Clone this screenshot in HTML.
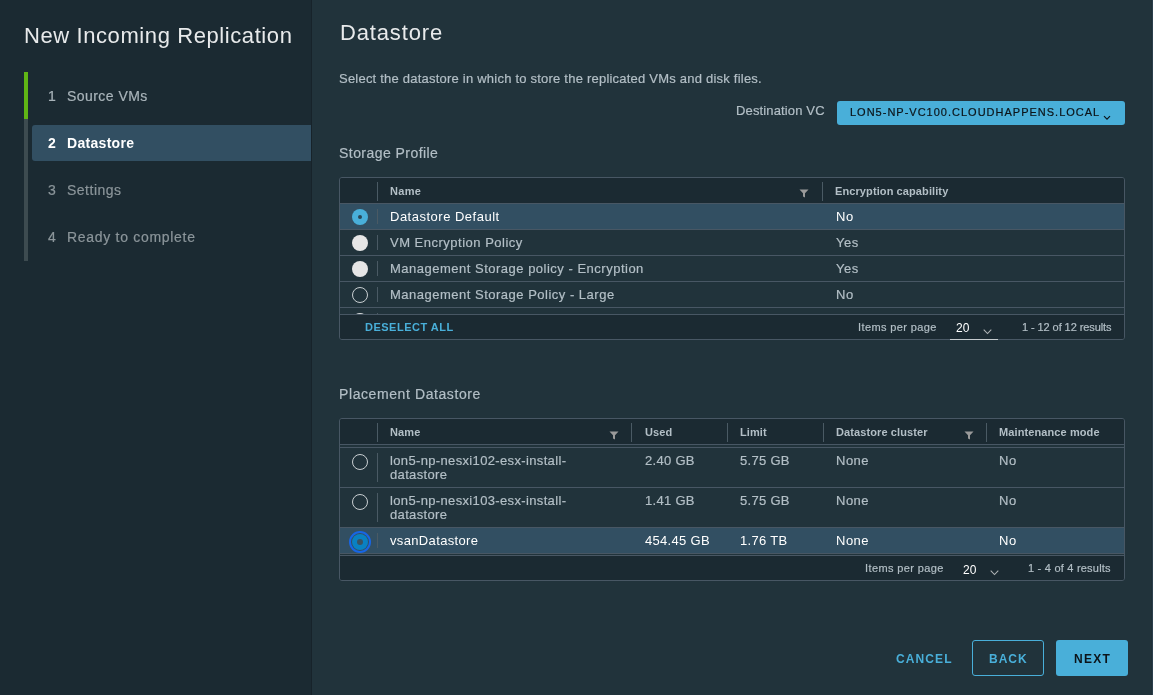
<!DOCTYPE html>
<html><head><meta charset="utf-8"><title>New Incoming Replication</title>
<style>
html,body{margin:0;padding:0;width:1153px;height:695px;overflow:hidden;background:#21333b;}
body{position:relative;font-family:"Liberation Sans",sans-serif;}
.t{position:absolute;white-space:nowrap;line-height:1;will-change:transform;}
.s{-webkit-text-stroke:0.2px currentColor;}
.r{position:absolute;}
</style></head><body>
<div class="r" style="left:0px;top:0px;width:311px;height:695px;background:#1b2a32"></div>
<div class="r" style="left:311px;top:0px;width:1px;height:695px;background:#17232a"></div>
<div class="t" style="left:23.50px;top:25.00px;font-size:22px;color:#e8eaeb;font-weight:400;letter-spacing:0.59px;">New Incoming Replication</div>
<div class="r" style="left:24px;top:72px;width:4px;height:189px;background:#3d4b50"></div>
<div class="r" style="left:24px;top:72px;width:4px;height:47px;background:#60b515"></div>
<div class="r" style="left:32px;top:125px;width:279px;height:36px;background:#324f62;border-radius:3px 0 0 3px"></div>
<div class="t s" style="left:48.00px;top:89.00px;font-size:14px;color:#a9b4ba;font-weight:400;letter-spacing:0px;">1</div>
<div class="t s" style="left:66.50px;top:89.00px;font-size:14px;color:#a9b4ba;font-weight:400;letter-spacing:0.45px;">Source VMs</div>
<div class="t" style="left:48.00px;top:136.00px;font-size:14px;color:#ffffff;font-weight:700;letter-spacing:0px;">2</div>
<div class="t" style="left:66.50px;top:136.00px;font-size:14px;color:#ffffff;font-weight:700;letter-spacing:0.3px;">Datastore</div>
<div class="t s" style="left:48.00px;top:183.00px;font-size:14px;color:#8b959a;font-weight:400;letter-spacing:0px;">3</div>
<div class="t s" style="left:66.50px;top:183.00px;font-size:14px;color:#8b959a;font-weight:400;letter-spacing:0.5px;">Settings</div>
<div class="t s" style="left:48.00px;top:230.00px;font-size:14px;color:#8b959a;font-weight:400;letter-spacing:0px;">4</div>
<div class="t s" style="left:66.50px;top:230.00px;font-size:14px;color:#8b959a;font-weight:400;letter-spacing:0.7px;">Ready to complete</div>
<div class="t" style="left:340.00px;top:22.00px;font-size:22px;color:#e8eaeb;font-weight:400;letter-spacing:0.85px;">Datastore</div>
<div class="t s" style="left:338.50px;top:72.00px;font-size:13px;color:#b3bfc6;font-weight:400;letter-spacing:0.22px;">Select the datastore in which to store the replicated VMs and disk files.</div>
<div class="t s" style="left:735.50px;top:104.00px;font-size:13px;color:#b3bfc6;font-weight:400;letter-spacing:0.14px;">Destination VC</div>
<div class="r" style="left:837px;top:101px;width:288px;height:24px;background:#49afd9;border-radius:3px"></div>
<div class="t s" style="left:850.00px;top:107.00px;font-size:11px;color:#0c1419;font-weight:400;letter-spacing:1.0px;">LON5-NP-VC100.CLOUDHAPPENS.LOCAL</div>
<svg class="r" style="left:1103px;top:115px" width="8" height="6" viewBox="0 0 8 6"><path d="M1 1.2 L4 4.2 L7 1.2" stroke="#0c1419" stroke-width="1.2" fill="none"/></svg>
<div class="t s" style="left:338.50px;top:146.00px;font-size:14px;color:#b3bfc6;font-weight:400;letter-spacing:0.45px;">Storage Profile</div>
<div class="r" style="left:339px;top:177px;width:786px;height:163px;border:1px solid #485764;border-radius:3px;box-sizing:border-box;background:#21333b;overflow:hidden"></div>
<div class="r" style="left:340px;top:178px;width:784px;height:25px;background:#1b2a32;border-radius:2px 2px 0 0"></div>
<div class="r" style="left:340px;top:203px;width:784px;height:1px;background:#485764"></div>
<div class="r" style="left:340px;top:204px;width:784px;height:25px;background:#324f62"></div>
<div class="r" style="left:340px;top:229px;width:784px;height:1px;background:#485764"></div>
<div class="r" style="left:352px;top:209px;width:16px;height:16px;background:#49afd9;border-radius:50%"></div>
<div class="r" style="left:358px;top:215px;width:4px;height:4px;background:#2c4656;border-radius:50%"></div>
<div class="r" style="left:377px;top:209px;width:1px;height:15px;background:#4a5a64"></div>
<div class="t" style="left:390.00px;top:210.00px;font-size:13px;color:#ffffff;font-weight:400;letter-spacing:0.5px;">Datastore Default</div>
<div class="t" style="left:835.50px;top:210.00px;font-size:13px;color:#ffffff;font-weight:400;letter-spacing:0.5px;">No</div>
<div class="r" style="left:340px;top:255px;width:784px;height:1px;background:#485764"></div>
<div class="r" style="left:352px;top:235px;width:16px;height:16px;background:#e6e6e6;border-radius:50%"></div>
<div class="r" style="left:377px;top:235px;width:1px;height:15px;background:#4a5a64"></div>
<div class="t s" style="left:390.00px;top:236.00px;font-size:13px;color:#b3bfc6;font-weight:400;letter-spacing:0.5px;">VM Encryption Policy</div>
<div class="t s" style="left:835.50px;top:236.00px;font-size:13px;color:#b3bfc6;font-weight:400;letter-spacing:0.5px;">Yes</div>
<div class="r" style="left:340px;top:281px;width:784px;height:1px;background:#485764"></div>
<div class="r" style="left:352px;top:261px;width:16px;height:16px;background:#e6e6e6;border-radius:50%"></div>
<div class="r" style="left:377px;top:261px;width:1px;height:15px;background:#4a5a64"></div>
<div class="t s" style="left:390.00px;top:262.00px;font-size:13px;color:#b3bfc6;font-weight:400;letter-spacing:0.5px;">Management Storage policy - Encryption</div>
<div class="t s" style="left:835.50px;top:262.00px;font-size:13px;color:#b3bfc6;font-weight:400;letter-spacing:0.5px;">Yes</div>
<div class="r" style="left:340px;top:307px;width:784px;height:1px;background:#485764"></div>
<div class="r" style="left:352px;top:287px;width:14px;height:14px;border:1px solid #c9cfd2;border-radius:50%"></div>
<div class="r" style="left:377px;top:287px;width:1px;height:15px;background:#4a5a64"></div>
<div class="t s" style="left:390.00px;top:288.00px;font-size:13px;color:#b3bfc6;font-weight:400;letter-spacing:0.5px;">Management Storage Policy - Large</div>
<div class="t s" style="left:835.50px;top:288.00px;font-size:13px;color:#b3bfc6;font-weight:400;letter-spacing:0.5px;">No</div>
<div class="r" style="left:340px;top:308px;width:784px;height:6px;overflow:hidden"><div class="r" style="left:12px;top:5px;width:16px;height:16px;background:#d8dcde;border-radius:50%"></div><div class="r" style="left:37px;top:5px;width:1px;height:14px;background:#4a5a64"></div></div>
<div class="r" style="left:340px;top:314px;width:784px;height:1px;background:#485764"></div>
<div class="r" style="left:340px;top:315px;width:784px;height:24px;background:#1b2a32;border-radius:0 0 2px 2px"></div>
<div class="r" style="left:377px;top:182px;width:1px;height:19px;background:#4a5a64"></div>
<div class="r" style="left:822px;top:182px;width:1px;height:19px;background:#4a5a64"></div>
<svg class="r" style="left:799px;top:189px" width="10" height="9" viewBox="0 0 10 9"><path d="M0.5 0.5 H9.5 L6 4.2 V8.5 L4 7.5 V4.2 Z" fill="#9a9a9a"/></svg>
<div class="t" style="left:390.00px;top:186.00px;font-size:11px;color:#b3bfc6;font-weight:700;letter-spacing:0.3px;">Name</div>
<div class="t" style="left:835.00px;top:186.00px;font-size:11px;color:#b3bfc6;font-weight:700;letter-spacing:0.1px;">Encryption capability</div>
<div class="t" style="left:365.00px;top:322.00px;font-size:11px;color:#49afd9;font-weight:700;letter-spacing:0.5px;">DESELECT ALL</div>
<div class="t s" style="left:858.00px;top:322.00px;font-size:11px;color:#b3bfc6;font-weight:400;letter-spacing:0.39px;">Items per page</div>
<div class="t" style="left:955.50px;top:322.00px;font-size:12px;color:#ffffff;font-weight:400;letter-spacing:0px;">20</div>
<svg class="r" style="left:982.5px;top:329px" width="9" height="6" viewBox="0 0 9 6"><path d="M0.7 0.7 L4.5 4.5 L8.3 0.7" stroke="#b0b4b6" stroke-width="1.05" fill="none"/></svg>
<div class="r" style="left:950px;top:339px;width:48px;height:1px;background:#c5cbce"></div>
<div class="t s" style="left:1021.50px;top:322.00px;font-size:11px;color:#b3bfc6;font-weight:400;letter-spacing:-0.08px;">1 - 12 of 12 results</div>
<div class="t s" style="left:338.50px;top:387.00px;font-size:14px;color:#b3bfc6;font-weight:400;letter-spacing:0.59px;">Placement Datastore</div>
<div class="r" style="left:339px;top:418px;width:786px;height:163px;border:1px solid #485764;border-radius:3px;box-sizing:border-box;background:#21333b;overflow:hidden"></div>
<div class="r" style="left:340px;top:419px;width:784px;height:25px;background:#1b2a32;border-radius:2px 2px 0 0"></div>
<div class="r" style="left:340px;top:444px;width:784px;height:1px;background:#485764"></div>
<div class="r" style="left:340px;top:445px;width:784px;height:3px;background:#21333b"></div>
<div class="r" style="left:340px;top:447px;width:784px;height:1px;background:#485764"></div>
<div class="r" style="left:377px;top:423px;width:1px;height:19px;background:#4a5a64"></div>
<div class="r" style="left:631px;top:423px;width:1px;height:19px;background:#4a5a64"></div>
<div class="r" style="left:727px;top:423px;width:1px;height:19px;background:#4a5a64"></div>
<div class="r" style="left:823px;top:423px;width:1px;height:19px;background:#4a5a64"></div>
<div class="r" style="left:986px;top:423px;width:1px;height:19px;background:#4a5a64"></div>
<svg class="r" style="left:608.5px;top:430.5px" width="10" height="9" viewBox="0 0 10 9"><path d="M0.5 0.5 H9.5 L6 4.2 V8.5 L4 7.5 V4.2 Z" fill="#9a9a9a"/></svg>
<svg class="r" style="left:963.5px;top:430.5px" width="10" height="9" viewBox="0 0 10 9"><path d="M0.5 0.5 H9.5 L6 4.2 V8.5 L4 7.5 V4.2 Z" fill="#9a9a9a"/></svg>
<div class="t" style="left:390.00px;top:427.00px;font-size:11px;color:#b3bfc6;font-weight:700;letter-spacing:0.1px;">Name</div>
<div class="t" style="left:644.50px;top:427.00px;font-size:11px;color:#b3bfc6;font-weight:700;letter-spacing:0.1px;">Used</div>
<div class="t" style="left:740.00px;top:427.00px;font-size:11px;color:#b3bfc6;font-weight:700;letter-spacing:0.1px;">Limit</div>
<div class="t" style="left:836.00px;top:427.00px;font-size:11px;color:#b3bfc6;font-weight:700;letter-spacing:0.1px;">Datastore cluster</div>
<div class="t" style="left:999.00px;top:427.00px;font-size:11px;color:#b3bfc6;font-weight:700;letter-spacing:0.1px;">Maintenance mode</div>
<div class="r" style="left:340px;top:487px;width:784px;height:1px;background:#485764"></div>
<div class="r" style="left:352px;top:454px;width:14px;height:14px;border:1px solid #c9cfd2;border-radius:50%"></div>
<div class="r" style="left:377px;top:453px;width:1px;height:29px;background:#4a5a64"></div>
<div class="t s" style="left:390px;top:454px;font-size:13px;line-height:14px;color:#b3bfc6;letter-spacing:0.35px">lon5-np-nesxi102-esx-install-<br>datastore</div>
<div class="t s" style="left:644.50px;top:454.00px;font-size:13px;color:#b3bfc6;font-weight:400;letter-spacing:0.3px;">2.40 GB</div>
<div class="t s" style="left:740.00px;top:454.00px;font-size:13px;color:#b3bfc6;font-weight:400;letter-spacing:0.3px;">5.75 GB</div>
<div class="t s" style="left:836.00px;top:454.00px;font-size:13px;color:#b3bfc6;font-weight:400;letter-spacing:0.5px;">None</div>
<div class="t s" style="left:999.00px;top:454.00px;font-size:13px;color:#b3bfc6;font-weight:400;letter-spacing:0.5px;">No</div>
<div class="r" style="left:340px;top:527px;width:784px;height:1px;background:#485764"></div>
<div class="r" style="left:352px;top:494px;width:14px;height:14px;border:1px solid #c9cfd2;border-radius:50%"></div>
<div class="r" style="left:377px;top:493px;width:1px;height:29px;background:#4a5a64"></div>
<div class="t s" style="left:390px;top:494px;font-size:13px;line-height:14px;color:#b3bfc6;letter-spacing:0.35px">lon5-np-nesxi103-esx-install-<br>datastore</div>
<div class="t s" style="left:644.50px;top:494.00px;font-size:13px;color:#b3bfc6;font-weight:400;letter-spacing:0.3px;">1.41 GB</div>
<div class="t s" style="left:740.00px;top:494.00px;font-size:13px;color:#b3bfc6;font-weight:400;letter-spacing:0.3px;">5.75 GB</div>
<div class="t s" style="left:836.00px;top:494.00px;font-size:13px;color:#b3bfc6;font-weight:400;letter-spacing:0.5px;">None</div>
<div class="t s" style="left:999.00px;top:494.00px;font-size:13px;color:#b3bfc6;font-weight:400;letter-spacing:0.5px;">No</div>
<div class="r" style="left:340px;top:528px;width:784px;height:25px;background:#324f62"></div>
<div class="r" style="left:340px;top:553px;width:784px;height:1px;background:#485764"></div>
<div class="r" style="left:349px;top:531px;width:18px;height:18px;border:2px solid #1766e6;border-radius:50%"></div>
<div class="r" style="left:352px;top:534px;width:16px;height:16px;background:#0981c2;border-radius:50%"></div>
<div class="r" style="left:357px;top:539px;width:6px;height:6px;background:#3b5261;border-radius:50%"></div>
<div class="r" style="left:377px;top:533px;width:1px;height:15px;background:#4a5a64"></div>
<div class="t" style="left:390px;top:534px;font-size:13px;line-height:14px;color:#ffffff;letter-spacing:0.35px">vsanDatastore</div>
<div class="t" style="left:644.50px;top:534.00px;font-size:13px;color:#ffffff;font-weight:400;letter-spacing:0.3px;">454.45 GB</div>
<div class="t" style="left:740.00px;top:534.00px;font-size:13px;color:#ffffff;font-weight:400;letter-spacing:0.3px;">1.76 TB</div>
<div class="t" style="left:836.00px;top:534.00px;font-size:13px;color:#ffffff;font-weight:400;letter-spacing:0.5px;">None</div>
<div class="t" style="left:999.00px;top:534.00px;font-size:13px;color:#ffffff;font-weight:400;letter-spacing:0.5px;">No</div>
<div class="r" style="left:340px;top:555px;width:784px;height:1px;background:#485764"></div>
<div class="r" style="left:340px;top:556px;width:784px;height:24px;background:#1b2a32;border-radius:0 0 2px 2px"></div>
<div class="t s" style="left:865.00px;top:563.00px;font-size:11px;color:#b3bfc6;font-weight:400;letter-spacing:0.39px;">Items per page</div>
<div class="t" style="left:963.00px;top:564.00px;font-size:12px;color:#ffffff;font-weight:400;letter-spacing:0px;">20</div>
<svg class="r" style="left:989.5px;top:570px" width="9" height="6" viewBox="0 0 9 6"><path d="M0.7 0.7 L4.5 4.5 L8.3 0.7" stroke="#b0b4b6" stroke-width="1.05" fill="none"/></svg>
<div class="t s" style="left:1028.00px;top:563.00px;font-size:11px;color:#b3bfc6;font-weight:400;letter-spacing:0.22px;">1 - 4 of 4 results</div>
<div class="t" style="left:895.50px;top:653.00px;font-size:12px;color:#49afd9;font-weight:700;letter-spacing:1.1px;">CANCEL</div>
<div class="r" style="left:972px;top:640px;width:72px;height:36px;border:1px solid #49afd9;border-radius:3px;box-sizing:border-box"></div>
<div class="t" style="left:988.50px;top:653.00px;font-size:12px;color:#49afd9;font-weight:700;letter-spacing:1.0px;">BACK</div>
<div class="r" style="left:1056px;top:640px;width:72px;height:36px;background:#49afd9;border-radius:3px"></div>
<div class="t" style="left:1073.50px;top:653.00px;font-size:12px;color:#0c1419;font-weight:700;letter-spacing:1.3px;">NEXT</div>
<div class="r" style="left:1151px;top:0px;width:1px;height:695px;background:#1f3038"></div>
<div class="r" style="left:1152px;top:0px;width:1px;height:695px;background:#2a3e4b"></div>
</body></html>
